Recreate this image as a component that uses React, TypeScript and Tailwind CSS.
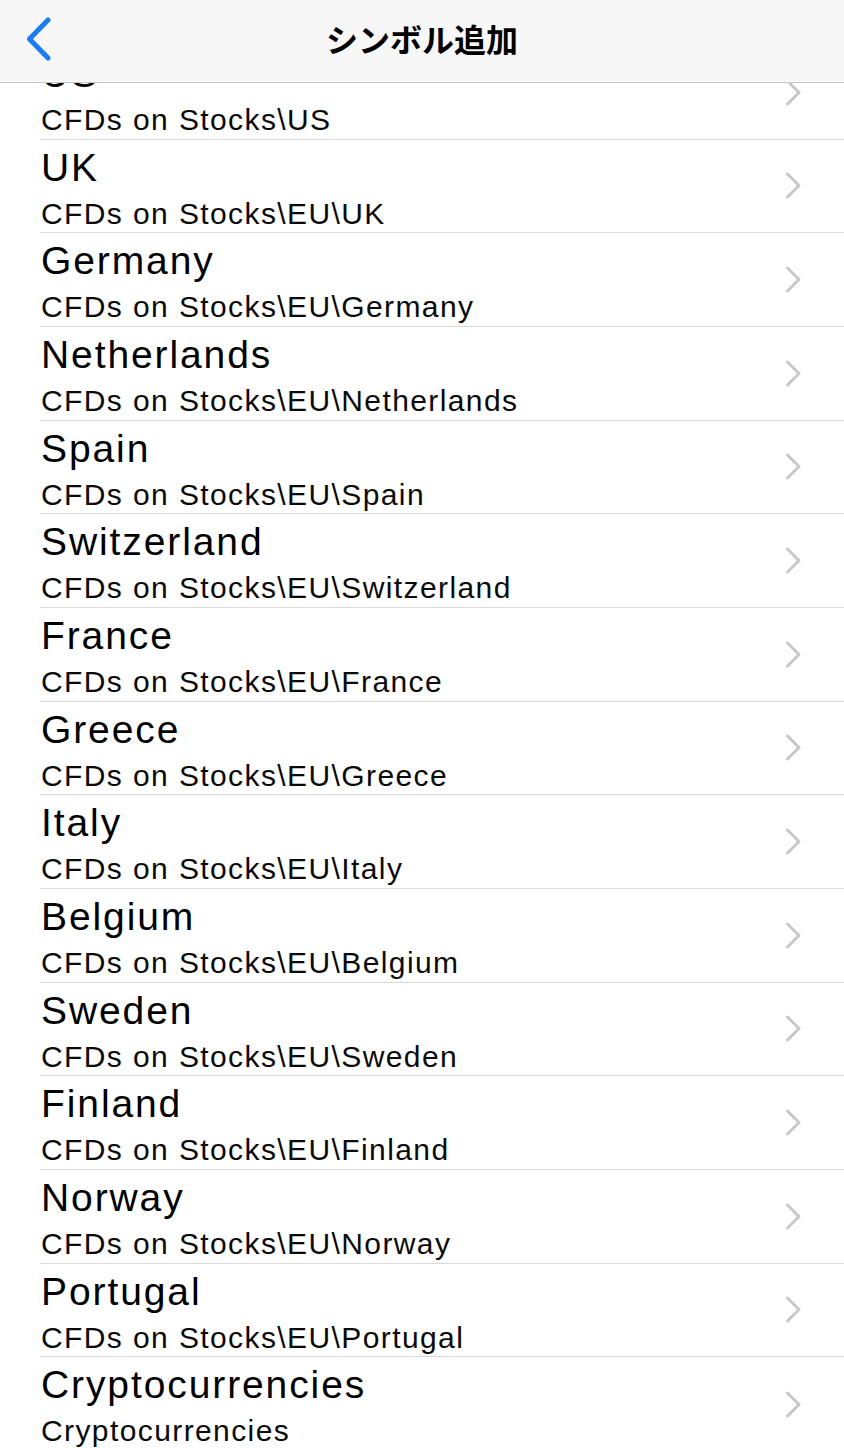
const rows = [
  { title: "US", sub: "CFDs on Stocks\\US" },
  { title: "UK", sub: "CFDs on Stocks\\EU\\UK" },
  { title: "Germany", sub: "CFDs on Stocks\\EU\\Germany" },
  { title: "Netherlands", sub: "CFDs on Stocks\\EU\\Netherlands" },
  { title: "Spain", sub: "CFDs on Stocks\\EU\\Spain" },
  { title: "Switzerland", sub: "CFDs on Stocks\\EU\\Switzerland" },
  { title: "France", sub: "CFDs on Stocks\\EU\\France" },
  { title: "Greece", sub: "CFDs on Stocks\\EU\\Greece" },
  { title: "Italy", sub: "CFDs on Stocks\\EU\\Italy" },
  { title: "Belgium", sub: "CFDs on Stocks\\EU\\Belgium" },
  { title: "Sweden", sub: "CFDs on Stocks\\EU\\Sweden" },
  { title: "Finland", sub: "CFDs on Stocks\\EU\\Finland" },
  { title: "Norway", sub: "CFDs on Stocks\\EU\\Norway" },
  { title: "Portugal", sub: "CFDs on Stocks\\EU\\Portugal" },
  { title: "Cryptocurrencies", sub: "Cryptocurrencies" },
];

function Row({ title, sub, last }: { title: string; sub: string; last: boolean }) {
  return (
    <div className="flex h-[93.67px] pl-[40px]">
      <div className={`flex h-full flex-1 pr-[42px] ${last ? "" : "border-b border-[#d9d9d9]"}`}>
        <div className="flex min-w-0 flex-1 flex-col pl-[1px] pt-[6px]">
          <p className="text-[39px] leading-[44px] tracking-[1.9px] text-black">{title}</p>
          <p className="mt-[7px] text-[30px] leading-[34px] tracking-[1.4px] text-[#0a0a0a]">{sub}</p>
        </div>
        {/* disclosure chevron */}
        <svg className="self-center" width="17" height="27" viewBox="0 0 17 27" fill="none">
          <path d="M2.5 2 L14 13.5 L2.5 25" stroke="#c7c7cc" strokeWidth="3" strokeLinecap="round" strokeLinejoin="round" />
        </svg>
      </div>
    </div>
  );
}

export default function App() {
  return (
    <div
      className="relative h-[1448px] w-[844px] overflow-hidden bg-white"
      style={{ fontFamily: '"Liberation Sans", "Noto Sans CJK JP", sans-serif' }}
    >
      {/* nav bar overlays the scrolled list */}
      <div className="absolute left-0 right-0 top-0 z-10 flex h-[83px] items-center justify-center border-b border-[#c9c9c9] bg-[#f7f7f7] pb-[6px]">
        <svg className="absolute left-[24px] top-[17px]" width="28" height="44" viewBox="0 0 28 44" fill="none">
          <path d="M24 3 L5.5 22 L24 41" stroke="#1b7cf4" strokeWidth="5" strokeLinecap="round" strokeLinejoin="round" />
        </svg>
        <span className="text-[32px] font-bold text-black" style={{ fontFamily: '"Noto Sans CJK JP", sans-serif' }}>
          シンボル追加
        </span>
      </div>

      <div className="pt-[46px]">
        {rows.map((r, i) => (
          <Row key={r.title} title={r.title} sub={r.sub} last={i === rows.length - 1} />
        ))}
      </div>
    </div>
  );
}
